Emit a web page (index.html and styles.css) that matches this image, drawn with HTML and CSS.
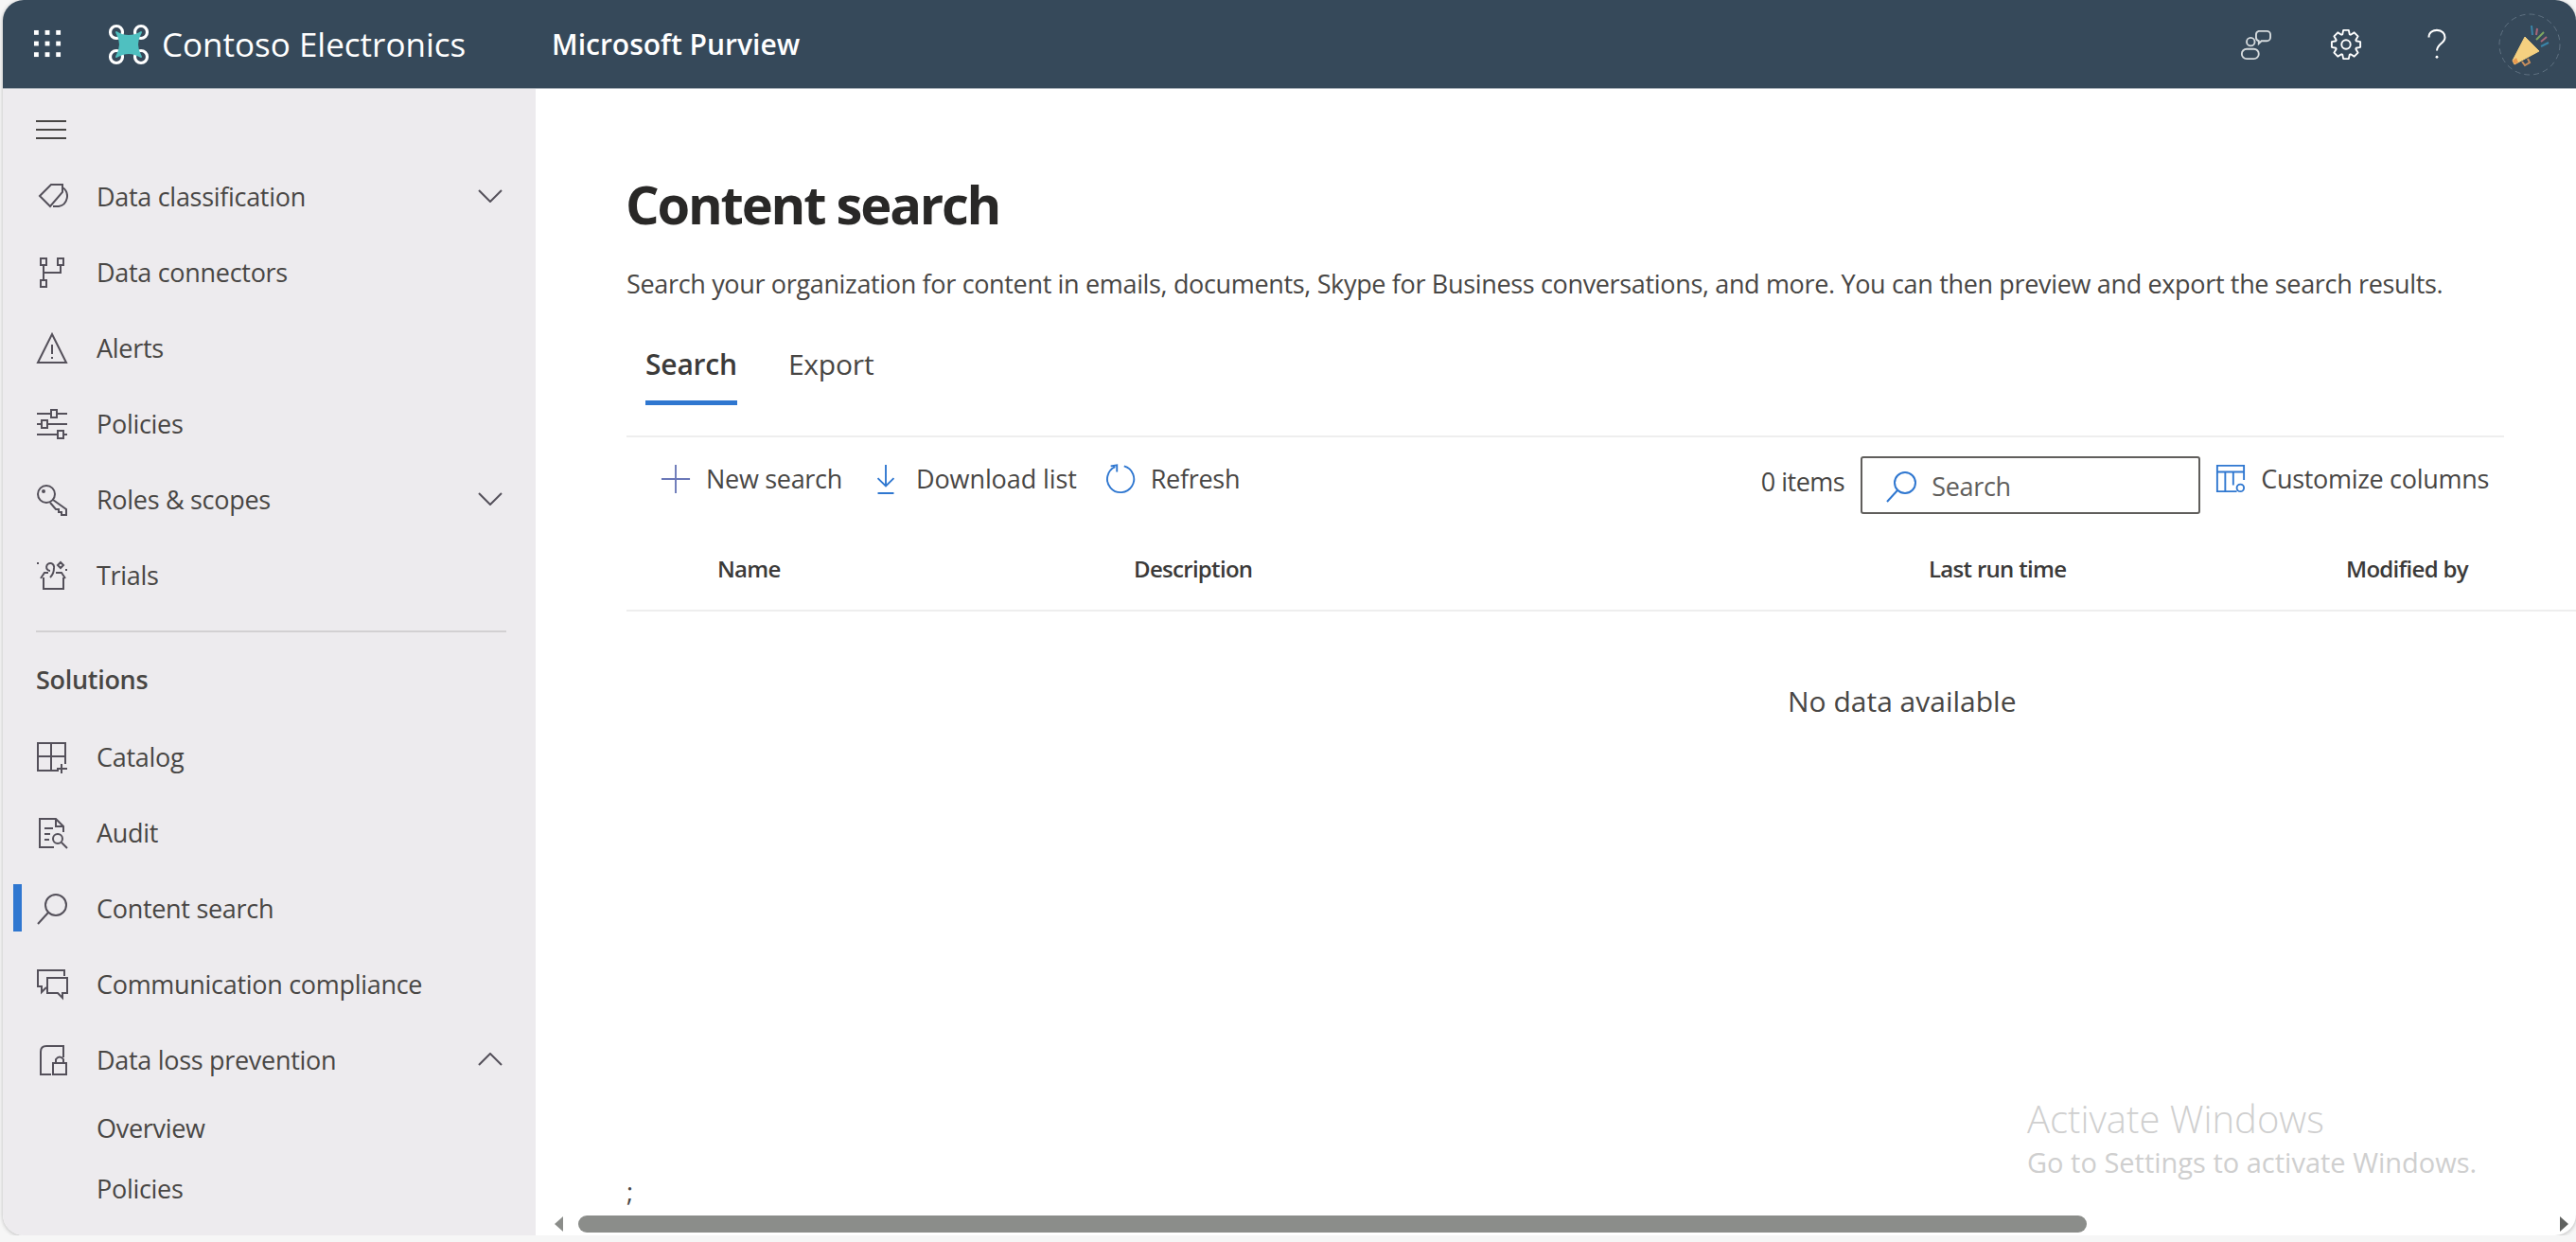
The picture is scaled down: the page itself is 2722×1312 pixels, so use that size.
FILE: index.html
```html
<!DOCTYPE html>
<html lang="en">
<head>
  <meta charset="UTF-8" />
  <title>Content search - Microsoft Purview</title>
  <link rel="stylesheet" href="styles.css">
</head>
<body>
  <div class="window">
    <header class="topbar">
      <svg class="waffle" viewBox="0 0 32 32"><g fill="#fff"><rect x="1" y="1" width="5" height="5"/><rect x="13" y="1" width="5" height="5"/><rect x="25" y="1" width="5" height="5"/><rect x="1" y="13" width="5" height="5"/><rect x="13" y="13" width="5" height="5"/><rect x="25" y="13" width="5" height="5"/><rect x="1" y="25" width="5" height="5"/><rect x="13" y="25" width="5" height="5"/><rect x="25" y="25" width="5" height="5"/></g></svg>
      <svg class="logo" viewBox="0 0 44 44"><g fill="none" stroke="#fff" stroke-width="3.200"><circle cx="9" cy="9" r="6.500"/><circle cx="35" cy="9" r="6.500"/><circle cx="9" cy="35" r="6.500"/><circle cx="35" cy="35" r="6.500"/></g><path d="M9 9 Q22 17 35 9 Q27 22 35 35 Q22 27 9 35 Q17 22 9 9 Z" fill="#4fc0c0" stroke="#4fc0c0" stroke-width="2" stroke-linejoin="round"/></svg>
      <span class="org-name">Contoso Electronics</span>
      <span class="app-name">Microsoft Purview</span>
      <div class="topbar-actions">
        <svg class="top-icon" viewBox="0 0 36 36" fill="none" stroke="#d5dadd" stroke-width="2"><circle cx="13" cy="15" r="4.500"/><rect x="3" y="23" width="19" height="11" rx="5.500"/><path d="M22 3 h9 a4 4 0 0 1 4 4 v3 a4 4 0 0 1 -4 4 h-6 l-3 3 v-3 a4 4 0 0 1 -3 -4 v-3 a4 4 0 0 1 3 -4 z"/></svg>
        <svg class="top-icon" viewBox="0 0 36 36" fill="none" stroke="#fff" stroke-width="2" stroke-linejoin="round"><circle cx="18" cy="18" r="5"/><path d="M14 6.700 L15 2 H21 L22 6.700 L23.100 7.100 L27.200 4.600 L31.400 8.800 L28.900 12.900 L29.300 14 L34 15 V21 L29.300 22 L28.900 23.100 L31.400 27.200 L27.200 31.400 L23.100 28.900 L22 29.300 L21 34 H15 L14 29.300 L12.900 28.900 L8.800 31.400 L4.600 27.200 L7.100 23.100 L6.700 22 L2 21 V15 L6.700 14 L7.100 12.900 L4.600 8.800 L8.800 4.600 L12.900 7.100 Z"/></svg>
        <svg class="top-icon" viewBox="0 0 36 36" fill="none" stroke="#fff" stroke-width="2.200"><path d="M9 10 C9 4 14 2 18 2 C24 2 27 6 27 10 C27 17 18 17 18 25"/><circle cx="18" cy="32" r="1.500" fill="#fff" stroke="none"/></svg>
        <svg class="avatar" viewBox="0 0 66 66" fill="none"><circle cx="33" cy="33" r="32" stroke="#5f7180" stroke-dasharray="6 4"/><path d="M15 50 L28 25 L43 40 L17 54 Z" fill="#f5d080" stroke="#f5d080"/><path d="M15 50 L17 54 L21 52 L19 47 Z" fill="#e89a50"/><path d="M25 51 L28 55 L33 52 L31 48" stroke="#c98f5c" stroke-width="2"/><path d="M35 13 L36 23" stroke="#3a84a8" stroke-width="2"/><path d="M41 16 L40 23" stroke="#a8687a" stroke-width="2"/><path d="M48 20 L40 28" stroke="#7fa860" stroke-width="2"/><path d="M51 25 L45 30" stroke="#a8687a" stroke-width="2"/><path d="M53 31 L45 35" stroke="#3a84a8" stroke-width="2"/></svg>
      </div>
    </header>

    <div class="layout">
      <nav class="sidebar">
        <div class="burger"><span></span><span></span><span></span></div>
        <a class="nav-item">
          <svg class="nav-icon" viewBox="0 0 34 34"><path d="M4 16 L16 4 H28 V12 L15 27 Z M28 7 A11 11 0 0 1 24 27 H18"/></svg>
          <span class="nav-label">Data classification</span>
          <svg class="chevron" viewBox="0 0 26 14"><path d="M1 1 L13 13 L25 1"/></svg>
        </a>
        <a class="nav-item">
          <svg class="nav-icon" viewBox="0 0 34 34"><path d="M5 2 H11 V9 H5 Z M23 2 H29 V9 H23 Z M5 25 H11 V32 H5 Z M8 9 V25 M26 9 V17 H8"/></svg>
          <span class="nav-label">Data connectors</span>
        </a>
        <a class="nav-item">
          <svg class="nav-icon" viewBox="0 0 34 34"><path d="M17 2 L32 32 H2 Z M17 13 V23 M17 26 V28"/></svg>
          <span class="nav-label">Alerts</span>
        </a>
        <a class="nav-item">
          <svg class="nav-icon" viewBox="0 0 34 34"><path d="M1 6 H16 M22 6 H33 M1 17 H6 M12 17 H33 M1 28 H23 M29 28 H33 M16 2 H22 V10 H16 Z M6 13 H12 V21 H6 Z M23 24 H29 V32 H23 Z"/></svg>
          <span class="nav-label">Policies</span>
        </a>
        <a class="nav-item">
          <svg class="nav-icon" viewBox="0 0 34 34"><circle cx="11" cy="11" r="9"/><circle cx="8" cy="8" r="1"/><path d="M18 17 L32 27 V33 H27 V30 H24 V27 H21 L15 20"/></svg>
          <span class="nav-label">Roles &amp; scopes</span>
          <svg class="chevron" viewBox="0 0 26 14"><path d="M1 1 L13 13 L25 1"/></svg>
        </a>
        <a class="nav-item">
          <svg class="nav-icon" viewBox="0 0 34 34"><path d="M8 19 V31 H29 V19 M5 20 L9 14 H13 M21 14 H27 L31 20 M19 9 A4 4 0 1 0 15 12 M19 9 C19 14 18 16 15 19 M2 3 V5 M26 3 L29 6 L26 9 L23 6 Z M32 10 V12"/></svg>
          <span class="nav-label">Trials</span>
        </a>
        <hr class="nav-divider">
        <div class="nav-heading">Solutions</div>
        <a class="nav-item">
          <svg class="nav-icon" viewBox="0 0 34 34"><path d="M24 31 H2 V2 H31 V24 M2 16 H31 M16 2 V31 M27 24 V34 M22 29 H33"/></svg>
          <span class="nav-label">Catalog</span>
        </a>
        <a class="nav-item">
          <svg class="nav-icon" viewBox="0 0 34 34"><path d="M19 32 H4 V2 H21 L29 10 V16 M21 2 V10 H29 M9 12 H18 M9 18 H15 M9 24 H14"/><circle cx="23" cy="23" r="5"/><path d="M27 27 L33 33"/></svg>
          <span class="nav-label">Audit</span>
        </a>
        <a class="nav-item is-current">
          <svg class="nav-icon" viewBox="0 0 34 34"><circle cx="21" cy="13" r="11"/><path d="M13 21 L2 33"/></svg>
          <span class="nav-label">Content search</span>
        </a>
        <a class="nav-item">
          <svg class="nav-icon" viewBox="0 0 34 34"><path d="M30 8 V2 H2 V19 H6 V25 L11 20 M12 10 H33 V26 H28 V31 L23 26 H12 Z"/></svg>
          <span class="nav-label">Communication compliance</span>
        </a>
        <a class="nav-item">
          <svg class="nav-icon" viewBox="0 0 34 34"><path d="M29 14 V2 H11 Q5 2 5 8 V32 H16 M18 20 H32 V32 H18 Z M21 20 V16 Q25 11 29 16 V20"/></svg>
          <span class="nav-label">Data loss prevention</span>
          <svg class="chevron" viewBox="0 0 26 14"><path d="M1 13 L13 1 L25 13"/></svg>
        </a>
        <a class="nav-sub">Overview</a>
        <a class="nav-sub">Policies</a>
      </nav>

      <main class="main">
        <div class="content">
          <h1 class="page-title">Content search</h1>
          <p class="page-desc">Search your organization for content in emails, documents, Skype for Business conversations, and more. You can then preview and export the search results.</p>
          <div class="tabs">
            <span class="tab is-active">Search</span>
            <span class="tab">Export</span>
          </div>
          <div class="toolbar">
            <button class="tool tool-new">
              <svg class="tool-icon" viewBox="0 0 34 34"><path d="M17 1 V33 M1 17 H33"/></svg>New search
            </button>
            <button class="tool tool-download">
              <svg class="tool-icon" viewBox="0 0 34 34"><path d="M17 1 V24 M8 16 L17 25 L26 16 M8 33 H26"/></svg>Download list
            </button>
            <button class="tool tool-refresh">
              <svg class="tool-icon" viewBox="0 0 34 34"><path d="M21 2.500 A15 15 0 1 1 11 3.300 M6 2.500 L13 1.500 V9"/></svg>Refresh
            </button>
            <span class="item-count">0 items</span>
            <div class="search-box">
              <svg class="search-icon" viewBox="0 0 34 34"><circle cx="21" cy="13" r="11"/><path d="M13 21 L2 33"/></svg>
              <span>Search</span>
            </div>
            <button class="tool tool-columns">
              <svg class="tool-icon" viewBox="0 0 34 34"><path d="M24 31 H2 V2 H32 V18 M2 9 H32 M11 9 V31 M20 9 V24"/><circle cx="28" cy="27" r="4"/></svg>Customize columns
            </button>
          </div>
          <div class="table-head">
            <span>Name</span>
            <span>Description</span>
            <span>Last run time</span>
            <span>Modified by</span>
          </div>
          <div class="empty">No data available</div>
          <div class="stray">;</div>
        </div>
        <div class="scrollbar">
          <span class="arrow arrow-left"></span>
          <div class="track"><div class="thumb"></div></div>
          <span class="arrow arrow-right"></span>
        </div>
        <div class="watermark">
          <div class="wm-title">Activate Windows</div>
          <div class="wm-sub">Go to Settings to activate Windows.</div>
        </div>
      </main>
    </div>
  </div>
</body>
</html>
```

FILE: styles.css
```css
* {
  box-sizing: border-box;
}

body {
  margin: 0;
  background: #f6f6f6;
  font-family: 'Open Sans', sans-serif;
  color: #323130;
  overflow: hidden;
}

.window {
  margin-left: 3px;
  height: 1305px;
  display: flex;
  flex-direction: column;
  background: white;
  border-radius: 22px;
  overflow: hidden;
  box-shadow: 0 1px 4px rgba(0,0,0,0.25);
}

/* top bar */
.topbar {
  height: 94px;
  flex: none;
  display: flex;
  align-items: center;
  background: #36495a;
  color: white;
  border-bottom: 1px solid #a9b1b9;
}

.waffle {
  width: 31px;
  height: 31px;
  margin-left: 32px;
}

.logo {
  width: 44px;
  height: 44px;
  margin-left: 48px;
}

.org-name {
  font-size: 35px;
  margin-left: 13px;
  width: 412px;
}

.app-name {
  font-size: 30px;
  font-weight: 600;
}

.topbar-actions {
  margin-left: auto;
  display: flex;
  align-items: center;
}

.top-icon {
  width: 34px;
  height: 34px;
  margin-right: 62px;
}

.avatar {
  width: 66px;
  height: 66px;
  margin-right: 16px;
  margin-left: -14px;
}

.layout {
  flex: 1;
  display: flex;
  min-height: 0;
}

/* left nav */
.sidebar {
  width: 563px;
  flex: none;
  background: #edebee;
  color: #484644;
  font-size: 27px;
}

.burger {
  height: 74px;
  padding: 33px 0 0 35px;
}

.burger span {
  display: block;
  width: 32px;
  height: 2px;
  background: #484644;
  margin-bottom: 7px;
}

.nav-item {
  position: relative;
  display: flex;
  align-items: center;
  height: 80px;
  padding-left: 35px;
}

.nav-icon {
  width: 34px;
  height: 34px;
  flex: none;
  fill: none;
  stroke: #54505a;
  stroke-width: 2;
}

.nav-label {
  margin: 0 0 2px 30px;
  letter-spacing: -0.3px;
}

.chevron {
  position: absolute;
  left: 502px;
  top: 32px;
  width: 26px;
  height: 14px;
  fill: none;
  stroke: #54505a;
  stroke-width: 2;
}

.is-current::before {
  content: "";
  position: absolute;
  left: 11px;
  top: 14px;
  width: 9px;
  height: 50px;
  background: #2f77d0;
}

.nav-divider {
  margin: 18px 31px 0 35px;
  border: none;
  height: 2px;
  background: #d2d0d2;
}

.nav-heading {
  height: 92px;
  display: flex;
  align-items: center;
  padding: 6px 0 0 35px;
  font-weight: 600;
  letter-spacing: -0.3px;
}

.nav-sub {
  display: flex;
  align-items: center;
  height: 64px;
  padding: 0 0 2px 99px;
  letter-spacing: -0.3px;
}

/* main area */
.main {
  position: relative;
  flex: 1;
  min-width: 0;
  display: flex;
  flex-direction: column;
}

.content {
  flex: 1;
  padding: 88px 0 0 96px;
}

.page-title {
  margin: 0 0 0 -1px;
  font-size: 56px;
  line-height: 66px;
  font-weight: 700;
  color: #292827;
  letter-spacing: -2.2px;
}

.page-desc {
  margin: 34px 0 0;
  font-size: 27px;
  line-height: 36px;
  color: #484644;
  white-space: nowrap;
  letter-spacing: -0.34px;
}

.tabs {
  display: flex;
  gap: 54px;
  margin: 32px 0 0 20px;
  height: 78px;
  font-size: 30px;
  color: #484644;
}

.tab {
  height: 78px;
  padding-top: 14px;
  letter-spacing: -0.2px;
}

.tab.is-active {
  font-weight: 600;
  border-bottom: 5px solid #2f77d0;
  color: #3b3a39;
}

.toolbar {
  margin-top: 32px;
  border-top: 2px solid #eeeeee;
  width: 1984px;
  height: 95px;
  display: flex;
  align-items: center;
  padding: 0 0 6px 36px;
  font-size: 27px;
  color: #484644;
}

.tool {
  display: flex;
  align-items: center;
  padding: 0;
  border: none;
  background: none;
  font: inherit;
  color: inherit;
  letter-spacing: -0.3px;
  cursor: pointer;
}

.tool-icon {
  width: 32px;
  height: 32px;
  margin-right: 16px;
  fill: none;
  stroke: #2f77d0;
  stroke-width: 2;
}

.tool-new {
  margin-right: 30px;
}

.tool-new .tool-icon {
  stroke: #6a78b8;
}

.tool-download {
  margin-right: 30px;
  letter-spacing: -0.1px;
}

.item-count {
  margin-left: auto;
  letter-spacing: -0.5px;
  padding-top: 6px;
}

.search-box {
  width: 359px;
  height: 61px;
  margin: 14px 0 0 17px;
  display: flex;
  align-items: center;
  padding: 2px 0 0 24px;
  border: 2px solid #605e5c;
  border-radius: 3px;
  letter-spacing: -0.3px;
  color: #605e5c;
}

.search-icon {
  width: 34px;
  height: 34px;
  margin-right: 15px;
  fill: none;
  stroke: #2f77d0;
  stroke-width: 2;
}

.tool-columns {
  margin: 0 16px;
}

.table-head {
  display: grid;
  grid-template-columns: 440px 840px 441px 1fr;
  align-items: center;
  height: 91px;
  padding: 2px 0 0 96px;
  font-size: 24px;
  font-weight: 600;
  color: #3b3a39;
  border-bottom: 2px solid #eeeeee;
  letter-spacing: -0.7px;
}

.empty {
  margin: 75px 0 0 1227px;
  font-size: 30px;
  color: #484644;
  line-height: 40px;
}

.stray {
  margin-top: 480px;
  font-size: 27px;
  line-height: 36px;
  color: #484644;
}

/* bottom scrollbar */
.scrollbar {
  flex: none;
  height: 28px;
  display: flex;
  align-items: center;
  padding: 3px 8px 0 20px;
}

.arrow {
  width: 0;
  height: 0;
  border-top: 8px solid transparent;
  border-bottom: 8px solid transparent;
  flex: none;
}

.arrow-left {
  border-right: 9px solid #8b8d8a;
}

.arrow-right {
  border-left: 9px solid #606260;
}

.track {
  flex: 1;
  margin: 0 9px 0 16px;
}

.thumb {
  width: 1594px;
  height: 18px;
  border-radius: 9px;
  background: #8b8d8a;
}

.watermark {
  position: absolute;
  left: 1576px;
  top: 1061px;
  color: #cfcfcf;
  white-space: nowrap;
}

.wm-title {
  font-size: 40px;
  line-height: 54px;
  font-weight: 300;
}

.wm-sub {
  font-size: 29px;
  line-height: 38px;
}
```
